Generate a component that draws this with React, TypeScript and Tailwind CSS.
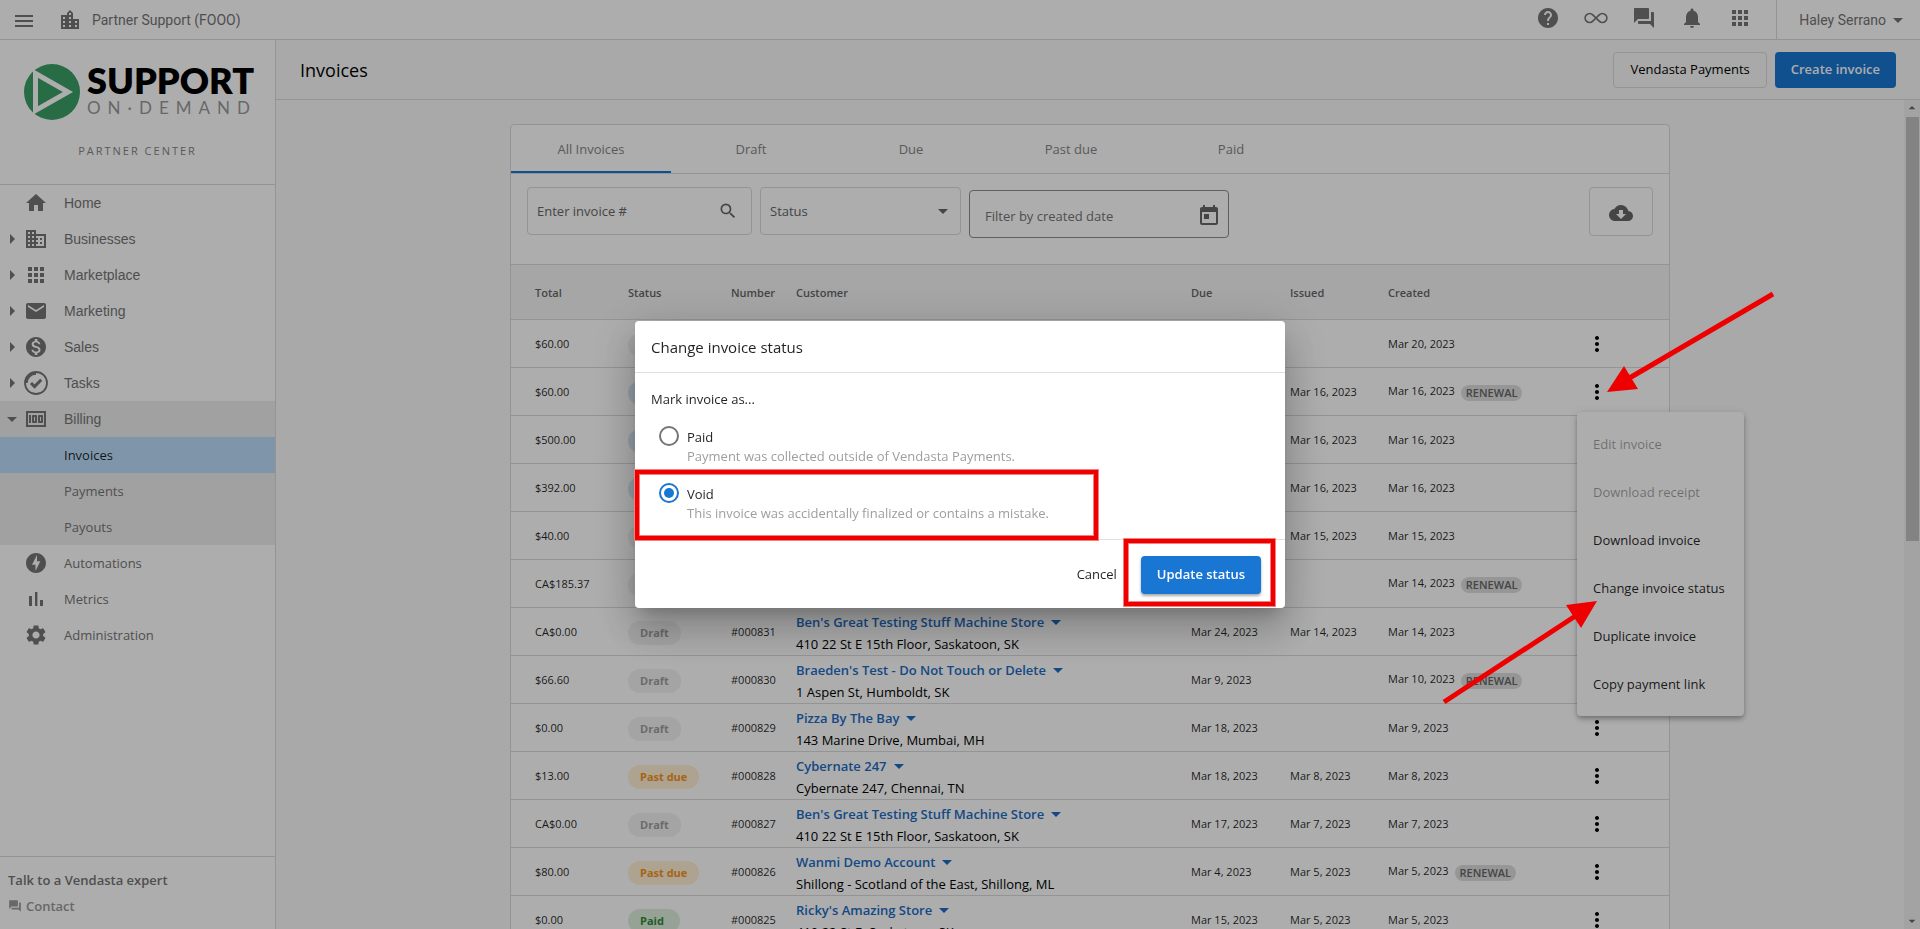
import React from "react";
import {
  MdMenu, MdLocationCity, MdHome, MdBusiness, MdApps, MdEmail, MdMonetizationOn, MdMoney, MdOfflineBolt,
  MdSettings, MdHelp, MdForum, MdNotifications, MdSearch, MdArrowDropDown, MdArrowDropUp, MdToday,
  MdCloudDownload, MdMoreVert, MdArrowRight,
} from "react-icons/md";

type Status = "Draft" | "Due" | "Past due" | "Paid";
type Invoice = {
  total: string; status: Status; number?: string; name?: string; address?: string;
  due?: string; issued?: string; created: string; renewal?: boolean; menu?: boolean;
};

const invoices: Invoice[] = [
  { total: "$60.00", status: "Draft", created: "Mar 20, 2023" },
  { total: "$60.00", status: "Due", issued: "Mar 16, 2023", created: "Mar 16, 2023", renewal: true, menu: true },
  { total: "$500.00", status: "Due", issued: "Mar 16, 2023", created: "Mar 16, 2023" },
  { total: "$392.00", status: "Due", issued: "Mar 16, 2023", created: "Mar 16, 2023" },
  { total: "$40.00", status: "Draft", issued: "Mar 15, 2023", created: "Mar 15, 2023" },
  { total: "CA$185.37", status: "Draft", created: "Mar 14, 2023", renewal: true },
  { total: "CA$0.00", status: "Draft", number: "#000831", name: "Ben's Great Testing Stuff Machine Store", address: "410 22 St E 15th Floor, Saskatoon, SK", due: "Mar 24, 2023", issued: "Mar 14, 2023", created: "Mar 14, 2023" },
  { total: "$66.60", status: "Draft", number: "#000830", name: "Braeden's Test - Do Not Touch or Delete", address: "1 Aspen St, Humboldt, SK", due: "Mar 9, 2023", created: "Mar 10, 2023", renewal: true },
  { total: "$0.00", status: "Draft", number: "#000829", name: "Pizza By The Bay", address: "143 Marine Drive, Mumbai, MH", due: "Mar 18, 2023", created: "Mar 9, 2023" },
  { total: "$13.00", status: "Past due", number: "#000828", name: "Cybernate 247", address: "Cybernate 247, Chennai, TN", due: "Mar 18, 2023", issued: "Mar 8, 2023", created: "Mar 8, 2023" },
  { total: "CA$0.00", status: "Draft", number: "#000827", name: "Ben's Great Testing Stuff Machine Store", address: "410 22 St E 15th Floor, Saskatoon, SK", due: "Mar 17, 2023", issued: "Mar 7, 2023", created: "Mar 7, 2023" },
  { total: "$80.00", status: "Past due", number: "#000826", name: "Wanmi Demo Account", address: "Shillong - Scotland of the East, Shillong, ML", due: "Mar 4, 2023", issued: "Mar 5, 2023", created: "Mar 5, 2023", renewal: true },
  { total: "$0.00", status: "Paid", number: "#000825", name: "Ricky's Amazing Store", address: "410 22 St E, Saskatoon, SK", due: "Mar 15, 2023", issued: "Mar 5, 2023", created: "Mar 5, 2023" },
];

const pillStyles: Record<Status, string> = {
  Draft: "bg-[#f2f2f2] text-[#9e9e9e]",
  Due: "bg-[#d6e9f8] text-[#1976d2]",
  "Past due": "bg-[#fff0d4] text-[#f5941c]",
  Paid: "bg-[#dcefdc] text-[#2e8b3a]",
};

function TasksIcon() {
  return (
    <svg viewBox="0 0 24 24" className="size-6" fill="none" stroke="currentColor">
      <circle cx="12" cy="12" r="11" strokeWidth="1.8" />
      <path d="M2.4 12A9.6 9.6 0 0 1 12 2.4" strokeWidth="2.6" />
      <path d="M7 12l3.600 3.600 6.600-6.900" strokeWidth="3" />
    </svg>
  );
}

function MetricsIcon() {
  return (
    <svg viewBox="0 0 20 20" className="size-5" fill="currentColor">
      <path d="M3 7h3v10H3zM9 3h2.4v14H9zM14 11h3v6h-3z" />
    </svg>
  );
}

function LoopIcon() {
  return (
    <svg viewBox="0 0 24 24" className="size-6" fill="none" stroke="currentColor" strokeWidth="1.7">
      <path d="M12 12l3.200-3.200A4.500 4.500 0 1 1 15.200 15.200L8.800 8.800A4.500 4.500 0 1 0 8.800 15.200z" />
    </svg>
  );
}

const navItems: { label: string; icon: React.ReactNode; arrow?: boolean; alt?: boolean }[] = [
  { label: "Home", icon: <MdHome className="size-6" />, alt: true },
  { label: "Businesses", icon: <MdBusiness className="size-6" />, arrow: true, alt: true },
  { label: "Marketplace", icon: <MdApps className="size-6" />, arrow: true, alt: true },
  { label: "Marketing", icon: <MdEmail className="size-6" />, arrow: true, alt: true },
  { label: "Sales", icon: <MdMonetizationOn className="size-6" />, arrow: true, alt: true },
  { label: "Tasks", icon: <TasksIcon />, arrow: true, alt: true },
];

const navTail = [
  { label: "Automations", icon: <MdOfflineBolt className="size-6" /> },
  { label: "Metrics", icon: <MetricsIcon /> },
  { label: "Administration", icon: <MdSettings className="size-6" /> },
];

function NavRow({ label, icon, arrow, alt }: { label: string; icon: React.ReactNode; arrow?: boolean; alt?: boolean }) {
  return (
    <a href="#" className="flex h-9 items-center text-[#757575]">
      <span className="flex w-6 justify-center">{arrow && <MdArrowRight className="size-6" />}</span>
      <span className="flex w-6 justify-center">{icon}</span>
      <span className={alt ? "ml-4 font-['Liberation_Sans',sans-serif] text-sm" : "ml-4 pt-[2px] text-[13px]"}>{label}</span>
    </a>
  );
}

function Sidebar() {
  return (
    <aside className="flex w-[276px] shrink-0 flex-col border-r border-[#dadada] bg-white">
      <div className="flex h-[145px] flex-col border-b border-[#dadada] pt-6">
        <div className="flex gap-[7px] pl-6 font-[Lato,sans-serif] whitespace-nowrap">
          <svg viewBox="0 0 56 56" className="size-14 shrink-0" aria-hidden="true">
            <circle cx="28" cy="28" r="28" fill="#3c9f66" />
            <path d="M11.500 9.500L44 28 11.500 46.500z" fill="none" stroke="#fff" strokeWidth="5" />
          </svg>
          <div>
            <div className="text-[36px] leading-8 font-extrabold">SUPPORT</div>
            <div className="text-[17px] leading-6 tracking-[7px] text-[#9a9a9a]">ON·DEMAND</div>
          </div>
        </div>
        <div className="mt-[23px] text-center text-[11px] tracking-[2px] text-[#858585]">PARTNER CENTER</div>
      </div>
      <nav className="flex flex-1 flex-col">
        {navItems.map((n) => <NavRow key={n.label} {...n} />)}
        <div className="bg-[#eeeeee]">
          <a href="#" className="flex h-9 items-center text-[#757575]">
            <span className="flex w-6 justify-center"><MdArrowDropDown className="size-6" /></span>
            <MdMoney className="size-6" />
            <span className="ml-4 font-['Liberation_Sans',sans-serif] text-sm">Billing</span>
          </a>
          <a href="#" className="flex h-9 items-center bg-[#bbdefb] pt-[2px] pl-16 text-[13px] text-black/87">Invoices</a>
          <a href="#" className="flex h-9 items-center pt-[2px] pl-16 text-[13px] text-[#757575]">Payments</a>
          <a href="#" className="flex h-9 items-center pt-[2px] pl-16 text-[13px] text-[#757575]">Payouts</a>
        </div>
        {navTail.map((n) => <NavRow key={n.label} {...n} />)}
      </nav>
      <div className="flex h-[73px] flex-col gap-2 border-t border-[#dadada] px-2 pt-[14px] text-[13px] leading-[18px] font-semibold text-[#757575]">
        <div>Talk to a Vendasta expert</div>
        <a href="#" className="flex items-center gap-1 text-[#9a9a9a]"><MdForum className="size-[14px]" />Contact</a>
      </div>
    </aside>
  );
}

function TopBar() {
  return (
    <header className="flex h-10 shrink-0 items-center border-b border-[#dadada] bg-white font-[Roboto,sans-serif] text-[#757575]">
      <button aria-label="Menu" className="ml-3 pt-[2px]"><MdMenu className="size-6" /></button>
      <MdLocationCity className="ml-[22px] size-6" />
      <span className="ml-[10px] flex-1 text-sm">Partner Support (FOOO)</span>
      <div className="flex gap-6 pb-[3px]">
        <button aria-label="Help"><MdHelp className="size-6" /></button>
        <button aria-label="Loop"><LoopIcon /></button>
        <button aria-label="Messages"><MdForum className="size-6" /></button>
        <button aria-label="Notifications"><MdNotifications className="size-6" /></button>
        <button aria-label="Apps"><MdApps className="size-6" /></button>
      </div>
      <button className="ml-6 flex h-full items-center border-l border-[#dadada] pr-[10px] pl-[22px] text-sm">
        Haley Serrano<MdArrowDropDown className="size-6" />
      </button>
    </header>
  );
}

function RowMenu() {
  const items = ["Edit invoice", "Download receipt", "Download invoice", "Change invoice status", "Duplicate invoice", "Copy payment link"];
  return (
    <div role="menu" className="absolute top-full left-0 z-10 flex w-[167px] flex-col rounded bg-white py-2 shadow-[0_2px_4px_-1px_rgba(0,0,0,0.2),0_4px_5px_rgba(0,0,0,0.14),0_1px_10px_rgba(0,0,0,0.12)]">
      {items.map((label, i) => (
        <button key={label} role="menuitem" disabled={i < 2} className="h-12 px-4 pt-[2px] text-left text-[13px] whitespace-nowrap text-black/87 disabled:text-black/38">
          {label}
        </button>
      ))}
    </div>
  );
}

function InvoiceTable() {
  return (
    <table className="w-full table-fixed border-collapse text-left text-[11px]">
      <colgroup>
        <col className="w-[117px]" />
        <col className="w-[103px]" />
        <col className="w-[65px]" />
        <col />
        <col className="w-[99px]" />
        <col className="w-[98px]" />
        <col className="w-[189px]" />
        <col className="w-[92px]" />
      </colgroup>
      <thead>
        <tr className="h-[54px] border-b border-[#dadada] bg-[#f5f5f5] text-[#666]">
          <th className="pt-[3px] pl-6 font-semibold">Total</th>
          <th className="pt-[3px] font-semibold">Status</th>
          <th className="pt-[3px] font-semibold">Number</th>
          <th className="pt-[3px] font-semibold">Customer</th>
          <th className="pt-[3px] font-semibold">Due</th>
          <th className="pt-[3px] font-semibold">Issued</th>
          <th className="pt-[3px] font-semibold">Created</th>
          <th aria-label="Actions" />
        </tr>
      </thead>
      <tbody>
        {invoices.map((v, i) => (
          <tr key={i} className="h-12 border-b border-[#dadada] text-black/87">
            <td className="pt-[2px] pl-6">{v.total}</td>
            <td className="pt-[3px]">
              <span className={`flex h-6 w-fit min-w-[52px] items-center rounded-xl px-3 pt-px text-[11px] font-bold ${pillStyles[v.status]}`}>{v.number && v.status}</span>
            </td>
            <td className="pt-[2px]">{v.number}</td>
            <td className="pt-[3px] text-[13px] leading-[22px] whitespace-nowrap text-black">
              {v.name && (
                <>
                  <a href="#" className="flex items-center font-semibold text-[#1c6cc4]">{v.name}<MdArrowDropDown className="-my-1 size-6" /></a>
                  <div>{v.address}</div>
                </>
              )}
            </td>
            <td className="pt-[2px]">{v.due}</td>
            <td className="pt-[2px]">{v.issued}</td>
            <td className="pt-[2px]">
              {v.created}
              {v.renewal && <span className="ml-[6px] inline-block h-4 rounded-lg bg-[#dddddd] px-[5px] align-middle text-[11px] leading-4 font-semibold text-[#666]">RENEWAL</span>}
            </td>
            <td className="pt-[2px]">
              <div className="relative size-10">
                <button aria-label="Invoice actions" className="flex size-10 items-center justify-center text-black"><MdMoreVert className="size-6" /></button>
                {v.menu && <RowMenu />}
              </div>
            </td>
          </tr>
        ))}
      </tbody>
    </table>
  );
}

function Content() {
  const tabs = ["All Invoices", "Draft", "Due", "Past due", "Paid"];
  return (
    <main className="flex min-w-0 flex-1 flex-col bg-[#fafafa]">
      <div className="flex h-[60px] shrink-0 items-center gap-2 border-b border-[#dadada] px-6">
        <h1 className="flex-1 text-lg">Invoices</h1>
        <button className="h-9 rounded border border-[#dadada] px-4 text-[13px] font-medium">Vendasta Payments</button>
        <button className="h-9 rounded bg-[#1976d2] px-4 text-[13px] font-semibold text-white">Create invoice</button>
      </div>
      <div className="flex min-h-0 flex-1">
        <div className="min-w-0 flex-1 overflow-hidden p-6">
          <section className="mx-auto max-w-[1160px] rounded border border-[#dadada] bg-white">
            <div role="tablist" className="flex h-[49px] border-b border-[#dadada]">
              {tabs.map((t, i) => (
                <button key={t} role="tab" aria-selected={i === 0} className="w-40 border-b-2 border-transparent pt-1 text-[13px] text-[#858585] aria-selected:border-[#1976d2]">{t}</button>
              ))}
            </div>
            <div className="flex h-[91px] items-start gap-2 border-b border-[#dadada] px-4 pt-[13px] text-[13px] text-[#666]">
              <label className="flex h-12 w-[225px] items-center rounded border border-[#dadada] pr-[13px] pl-[9px]">
                <input aria-label="Invoice number" placeholder="Enter invoice #" className="min-w-0 flex-1 bg-transparent pt-px placeholder:text-[#666]" />
                <MdSearch className="size-5" />
              </label>
              <div className="relative h-12 w-[201px]">
                <select aria-label="Status" className="h-12 w-full appearance-none rounded border border-[#dadada] px-[9px] pt-px">
                  <option>Status</option>
                </select>
                <MdArrowDropDown className="pointer-events-none absolute top-3 right-[6px] size-6" />
              </div>
              <label className="mt-[3px] flex h-12 w-[260px] items-center rounded border border-[#8c8c8c] pt-[3px] pr-[7px] pl-[15px]">
                <input aria-label="Created date" placeholder="Filter by created date" className="min-w-0 flex-1 bg-transparent pt-[2px] placeholder:text-[#757575]" />
                <MdToday className="size-6" />
              </label>
              <button aria-label="Download" className="ml-auto flex h-[49px] w-16 items-center justify-center rounded border border-[#dadada] pt-[2px]"><MdCloudDownload className="size-6" /></button>
            </div>
            <InvoiceTable />
          </section>
        </div>
        <div aria-hidden="true" className="flex w-4 shrink-0 flex-col items-center bg-[#f1f1f1] text-[#666]">
          <MdArrowDropUp className="size-4" />
          <div className="mt-px h-[424px] w-[13px] bg-[#c1c1c1]" />
          <MdArrowDropDown className="mt-auto size-4" />
        </div>
      </div>
    </main>
  );
}

function Option({ label, hint, checked }: { label: string; hint: string; checked?: boolean }) {
  return (
    <label className="flex gap-2">
      <input type="radio" name="status" defaultChecked={checked} className="mt-px size-5 shrink-0 appearance-none rounded-full border-2 border-[#757575] p-[3px] checked:border-[#1976d2] checked:bg-[#1976d2] checked:bg-clip-content" />
      <span className="pt-[3px] text-[13px] leading-[19px]">
        {label}
        <span className="block text-[#9e9e9e]">{hint}</span>
      </span>
    </label>
  );
}

function Dialog() {
  const mark = "pointer-events-none absolute border-4 border-[#ee0000] shadow-[0_0_0_1px_#f48080,inset_0_0_0_1px_#f48080]";
  return (
    <div className="fixed inset-0 z-20 flex items-center justify-center bg-black/32">
      <div role="dialog" aria-label="Change invoice status" className="relative w-[650px] rounded bg-white text-black/87 shadow-[0_11px_15px_-7px_rgba(0,0,0,0.2),0_24px_38px_3px_rgba(0,0,0,0.14),0_9px_46px_8px_rgba(0,0,0,0.12)]">
        <h2 className="flex h-[52px] items-center border-b border-[#e0e0e0] px-4 pt-[2px] text-[15px]">Change invoice status</h2>
        <div className="flex h-[167px] flex-col border-b border-[#e0e0e0] px-4 pt-4 text-[13px]">
          <p className="leading-[20px]">Mark invoice as...</p>
          <div className="mt-4 flex flex-col gap-4 pl-2">
            <Option label="Paid" hint="Payment was collected outside of Vendasta Payments." />
            <Option label="Void" hint="This invoice was accidentally finalized or contains a mistake." checked />
          </div>
        </div>
        <div className="flex h-[68px] items-center justify-end gap-6 px-6 pt-px text-[13px]">
          <button>Cancel</button>
          <button className="h-[38px] rounded bg-[#1976d2] px-4 font-semibold text-white shadow-[0_2px_3px_rgba(0,0,0,0.35)]">Update status</button>
        </div>
        <div className={`${mark} top-[149px] left-0 h-[70px] w-[463px]`} />
        <div className={`${mark} top-[218px] left-[489px] h-[67px] w-[151px]`} />
        <svg viewBox="0 0 370 440" className="pointer-events-none absolute -top-[41px] left-[785px] h-[440px] w-[370px]" fill="#ee0000" stroke="#ee0000">
          <path d="M353 14L206 100" strokeWidth="5" />
          <path d="M187 112L204 86 218 109z" stroke="none" />
          <path d="M24 422L160 333" strokeWidth="5" />
          <path d="M177 321L161 348 146 325z" stroke="none" />
        </svg>
      </div>
    </div>
  );
}

export default function App() {
  return (
    <div className="flex h-screen flex-col overflow-hidden font-['Open_Sans','Noto_Sans',sans-serif] text-black">
      <TopBar />
      <div className="flex min-h-0 flex-1">
        <Sidebar />
        <Content />
      </div>
      <Dialog />
    </div>
  );
}
